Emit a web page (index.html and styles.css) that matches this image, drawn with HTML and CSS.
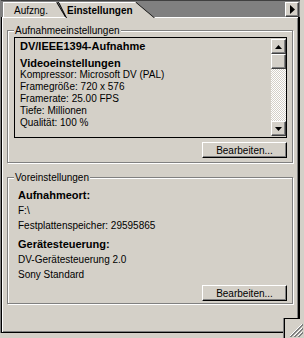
FILE: index.html
```html
<!DOCTYPE html>
<html lang="de">
<head>
  <meta charset="UTF-8" />
  <meta name="viewport" content="width=device-width, initial-scale=1.0"/>
  <title>Einstellungen</title>
  <link rel="stylesheet" href="styles.css">
</head>
<body>

  <div class="window">
    <div class="palette">
      <div class="tabs">
        <div class="tab"><div class="tab-face">Aufzng.</div></div>
        <div class="tab active"><div class="tab-face">Einstellungen</div></div>
        <button class="menu-btn">
          <svg width="5" height="9" viewBox="0 0 5 9"><path d="M0 0L5 4.5L0 9Z" fill="#000"/></svg>
        </button>
      </div>

      <div class="panel">
        <fieldset class="group">
          <legend>Aufnahmeeinstellungen</legend>
          <div class="listbox">
            <div class="list-text">
              <div class="head first">DV/IEEE1394-Aufnahme</div>
              <div class="head">Videoeinstellungen</div>
              <div>Kompressor: Microsoft DV (PAL)</div>
              <div>Framegröße: 720 x 576</div>
              <div>Framerate: 25.00 FPS</div>
              <div>Tiefe: Millionen</div>
              <div>Qualität: 100 %</div>
            </div>
            <div class="scrollbar">
              <div class="sb-btn">
                <svg width="7" height="4" viewBox="0 0 7 4"><path d="M3.5 0L7 4H0Z" fill="#000"/></svg>
              </div>
              <div class="sb-thumb"></div>
              <div class="sb-track"></div>
              <div class="sb-btn">
                <svg width="7" height="4" viewBox="0 0 7 4"><path d="M0 0H7L3.5 4Z" fill="#000"/></svg>
              </div>
            </div>
          </div>
          <div class="actions"><button class="btn">Bearbeiten...</button></div>
        </fieldset>

        <fieldset class="group presets">
          <legend>Voreinstellungen</legend>
          <div class="info">
            <div class="head">Aufnahmeort:</div>
            <div>F:\</div>
            <div>Festplattenspeicher: 29595865</div>
            <div class="head gap">Gerätesteuerung:</div>
            <div>DV-Gerätesteuerung 2.0</div>
            <div>Sony Standard</div>
          </div>
          <div class="actions bottom"><button class="btn">Bearbeiten...</button></div>
        </fieldset>
      </div>
    </div>

    <div class="grip">
      <svg width="14" height="14" viewBox="0 0 14 14" shape-rendering="crispEdges">
        <path d="M13 1L1 13" stroke="#fff"/>
        <path d="M14 1L1 14M14 2L2 14" stroke="#808080"/>
        <path d="M13 5L5 13" stroke="#fff"/>
        <path d="M14 5L5 14M14 6L6 14" stroke="#808080"/>
        <path d="M13 9L9 13" stroke="#fff"/>
        <path d="M14 9L9 14M14 10L10 14" stroke="#808080"/>
      </svg>
    </div>
  </div>

</body>
</html>
```

FILE: styles.css
```css
body {
  margin: 0;
  background: #d4d0c8;
  font-family: "Liberation Sans", Arial, sans-serif;
  font-size: 10px;
  color: #000;
}
.window {
  position: relative;
  width: 304px;
  height: 338px;
}
.palette {
  width: 300px;
  height: 333px;
  box-sizing: border-box;
  border-left: 1px solid #808080;
  display: flex;
  flex-direction: column;
}

/* tab strip */
.tabs {
  height: 17px;
  box-sizing: border-box;
  border-top: 1px solid #404040;
  background: #808080;
  display: flex;
  align-items: flex-end;
  padding-left: 2px;
}
.tab {
  flex: none;
  width: 63px;
  height: 15px;
  background: #000;
  clip-path: polygon(0 0, calc(100% - 9px) 0, 100% 100%, 0 100%);
}
.tab-face {
  height: 100%;
  box-sizing: border-box;
  padding: 2px 0 0 11px;
  line-height: 13px;
  white-space: nowrap;
  background: #d4d0c8;
  box-shadow: inset 1px 1px #fff;
  clip-path: polygon(0 0, calc(100% - 10px) 0, calc(100% - 1px) 100%, 0 100%);
}
.tab.active {
  width: 97px;
  height: 16px;
  margin-left: -8px;
  margin-bottom: -1px;
  position: relative;
  z-index: 1;
  clip-path: polygon(0 0, calc(100% - 19px) 0, 100% 100%, 8px 100%);
}
.tab.active .tab-face {
  padding-left: 9px;
  font-weight: bold;
  clip-path: polygon(1px 0, calc(100% - 20px) 0, calc(100% - 1px) 100%, 9px 100%);
}
.menu-btn {
  margin-left: auto;
  margin-right: 1px;
  width: 14px;
  height: 15px;
  padding: 0;
  background: #d4d0c8;
  border: 1px solid;
  border-color: #fff #404040 #404040 #fff;
  box-shadow: inset -1px -1px #808080;
  display: flex;
  align-items: center;
  justify-content: center;
}

/* panel body */
.panel {
  flex: 1;
  border: 1px solid #000;
  border-top: none;
  border-right-width: 2px;
  box-shadow: inset 1px 1px #fff, inset -1px -1px #808080;
  padding: 7px 5px 0;
}
.group {
  margin: 0;
  min-width: 0;
  padding: 0 5px 4px 6px;
  border: 1px solid #808080;
  box-shadow: inset 1px 1px #fff, 1px 1px #fff;
}
.group legend {
  padding: 0 1px;
  line-height: 13px;
  background: #d4d0c8;
}
.presets {
  margin-top: 8px;
  padding-top: 4px;
  padding-bottom: 2px;
}
.head {
  font-weight: bold;
  font-size: 11px;
}

.listbox {
  height: 101px;
  box-sizing: border-box;
  border: 1px solid #000;
  display: flex;
}
.list-text {
  flex: 1;
  padding: 2px 0 0 5px;
  line-height: 12px;
  white-space: nowrap;
}
.list-text .first {
  margin-bottom: 5px;
}
.scrollbar {
  width: 15px;
  margin: 1px 0;
  display: flex;
  flex-direction: column;
}
.sb-btn, .sb-thumb {
  height: 15px;
  box-sizing: border-box;
  background: #d4d0c8;
  border: 1px solid;
  border-color: #fff #404040 #404040 #fff;
  box-shadow: inset -1px -1px #808080;
  display: flex;
  align-items: center;
  justify-content: center;
}
.sb-track {
  flex: 1;
  background: repeating-conic-gradient(#fff 0 25%, #d4d0c8 0 50%) 0 0 / 2px 2px;
}

.info {
  padding-left: 4px;
  line-height: 15px;
  white-space: nowrap;
}
.info .gap {
  margin-top: 4px;
}

.actions {
  display: flex;
  justify-content: flex-end;
  margin-top: 4px;
}
.actions.bottom {
  margin-top: 3px;
}
.btn {
  width: 85px;
  height: 16px;
  padding: 0;
  font: inherit;
  color: #000;
  background: #d4d0c8;
  border: 1px solid;
  border-color: #fff #000 #000 #fff;
  box-shadow: inset -1px -1px #808080;
}

/* resize corner */
.grip {
  position: absolute;
  left: 284px;
  top: 318px;
  width: 20px;
  height: 20px;
  box-sizing: border-box;
  border-left: 1px solid #000;
  background: linear-gradient(#000, #000) 0 0 / 15px 1px no-repeat, #d4d0c8;
  box-shadow: -1px 0 #808080;
  display: flex;
  align-items: flex-end;
  justify-content: flex-end;
  padding: 0 1px 1px 0;
}
```
